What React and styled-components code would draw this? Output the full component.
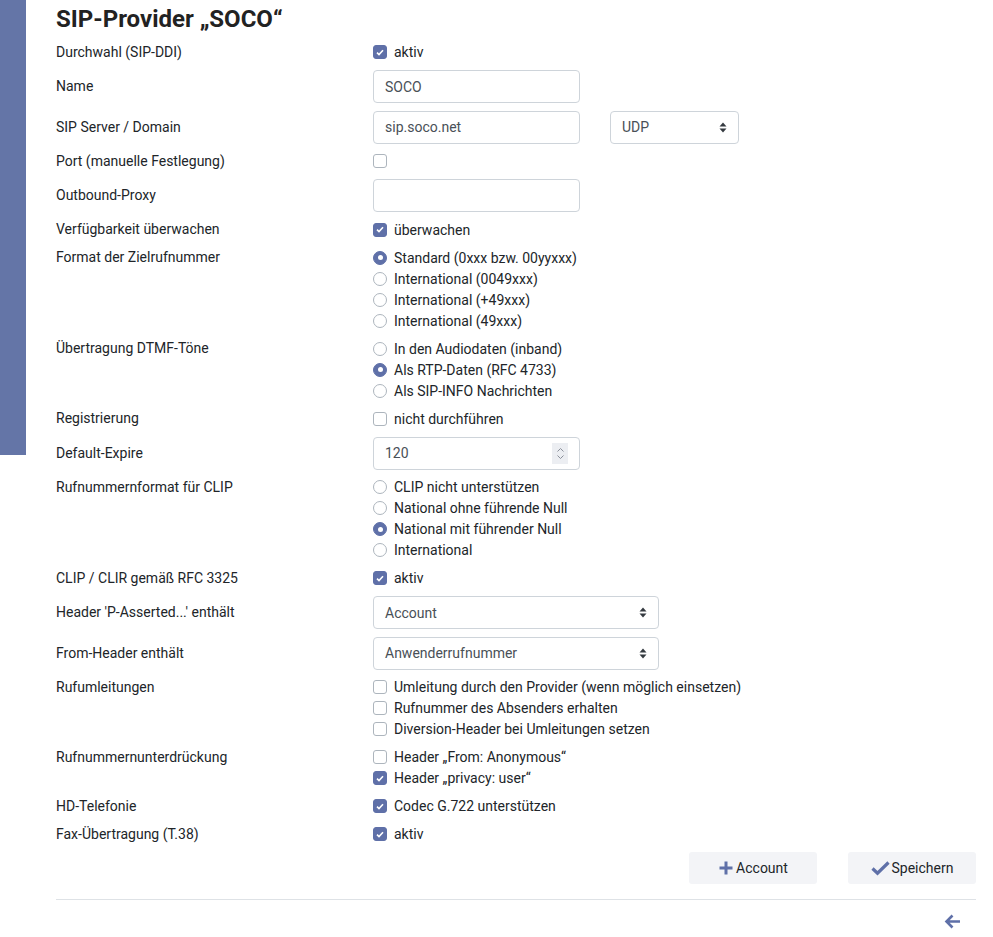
import React from 'react';
import styled, { createGlobalStyle } from 'styled-components';

const GlobalStyle = createGlobalStyle`
  body {
    margin: 0;
    background: #fff;
    font-family: Roboto, "Liberation Sans", Arial, sans-serif;
    color: #212529;
  }
`;

const ACCENT = '#5f70a8';

const Page = styled.div`
  display: flex;
  align-items: flex-start;
`;

const Sidebar = styled.div`
  width: 26px;
  height: 455px;
  flex: none;
  background: #6475a7;
`;

const Main = styled.div`
  width: 920px;
  margin-left: 30px;
`;

const Title = styled.h1`
  margin: 5px 0 7.5px;
  font-size: 24px;
  line-height: 29px;
  font-weight: 700;
  color: #222;
`;

const Row = styled.div`
  display: grid;
  grid-template-columns: 317px 1fr;
  margin-bottom: 7px;
`;

const Label = styled.div`
  font-size: 14px;
  line-height: 21px;
  padding-top: ${p => (p.$field ? '6.5px' : '0')};
`;

const Control = styled.div`
  display: flex;
  flex-direction: column;
  padding-top: ${p => (p.$field ? '0.5px' : '0')};
`;

const Inline = styled.div`
  display: flex;
  gap: 30px;
`;

const TextInput = styled.div`
  box-sizing: border-box;
  width: ${p => p.$w || 207}px;
  height: 33px;
  border: 1px solid #ced4da;
  border-radius: 4px;
  padding: 0 11px;
  display: flex;
  align-items: center;
  justify-content: space-between;
  font-size: 14px;
  color: #495057;
`;

const Spinner = styled.span`
  width: 16px;
  height: 21px;
  background: #eceef2;
  display: flex;
  align-items: center;
  justify-content: center;
  margin-right: 0;
`;

const Option = styled.label`
  display: flex;
  align-items: center;
  gap: 7px;
  height: 21px;
  font-size: 14px;
`;

const Box = styled.span`
  box-sizing: border-box;
  width: 14px;
  height: 14px;
  border-radius: 3px;
  flex: none;
  display: flex;
  align-items: center;
  justify-content: center;
  border: 1px solid ${p => (p.$on ? ACCENT : '#adb5bd')};
  background: ${p => (p.$on ? ACCENT : '#fff')};
`;

const Dot = styled.span`
  box-sizing: border-box;
  width: 14px;
  height: 14px;
  border-radius: 50%;
  flex: none;
  display: flex;
  align-items: center;
  justify-content: center;
  border: 1px solid ${p => (p.$on ? ACCENT : '#adb5bd')};
  background: ${p => (p.$on ? ACCENT : '#fff')};
  &::after {
    content: '';
    width: 5px;
    height: 5px;
    border-radius: 50%;
    background: ${p => (p.$on ? '#fff' : 'transparent')};
  }
`;

const Actions = styled.div`
  display: flex;
  justify-content: flex-end;
  gap: 31px;
  margin-top: 0.5px;
  margin-bottom: 15px;
`;

const Button = styled.button`
  box-sizing: border-box;
  width: 128px;
  height: 32px;
  border: none;
  border-radius: 3px;
  background: #f3f4f7;
  font-family: inherit;
  font-size: 14px;
  color: #212529;
  display: flex;
  align-items: center;
  justify-content: center;
  gap: 2px;
  padding: 0;
`;

const Rule = styled.hr`
  margin: 0;
  border: 0;
  border-top: 1px solid #dee2e6;
`;

const Footer = styled.div`
  display: flex;
  justify-content: flex-end;
  padding: 14px 15px 0 0;
`;

const Check = ({ on, children }) => (
  <Option>
    <Box $on={on}>
      {on && (
        <svg width="8" height="7" viewBox="0 0 8 7">
          <path d="M1 3.6 3 5.5 7 1.2" fill="none" stroke="#fff" strokeWidth="1.6" />
        </svg>
      )}
    </Box>
    {children}
  </Option>
);

const Radio = ({ on, children }) => (
  <Option>
    <Dot $on={on} />
    {children}
  </Option>
);

const SortIcon = () => (
  <svg width="8" height="11" viewBox="0 0 8 11">
    <path d="M4 0.5 7.5 4.5H0.5Z M4 10.5 7.5 6.5H0.5Z" fill="#343a40" />
  </svg>
);

const Select = ({ w, children }) => (
  <TextInput $w={w}>
    <span>{children}</span>
    <SortIcon />
  </TextInput>
);

const Field = ({ label, field, children }) => (
  <Row>
    <Label $field={field}>{label}</Label>
    <Control $field={field}>{children}</Control>
  </Row>
);

export default function App() {
  return (
    <Page>
      <GlobalStyle />
      <Sidebar />
      <Main>
        <Title>SIP-Provider „SOCO“</Title>

        <Field label="Durchwahl (SIP-DDI)"><Check on>aktiv</Check></Field>
        <Field label="Name" field><TextInput>SOCO</TextInput></Field>
        <Field label="SIP Server / Domain" field>
          <Inline>
            <TextInput>sip.soco.net</TextInput>
            <Select w={129}>UDP</Select>
          </Inline>
        </Field>
        <Field label="Port (manuelle Festlegung)"><Check /></Field>
        <Field label="Outbound-Proxy" field><TextInput /></Field>
        <Field label="Verfügbarkeit überwachen"><Check on>überwachen</Check></Field>
        <Field label="Format der Zielrufnummer">
          <Radio on>Standard (0xxx bzw. 00yyxxx)</Radio>
          <Radio>International (0049xxx)</Radio>
          <Radio>International (+49xxx)</Radio>
          <Radio>International (49xxx)</Radio>
        </Field>
        <Field label="Übertragung DTMF-Töne">
          <Radio>In den Audiodaten (inband)</Radio>
          <Radio on>Als RTP-Daten (RFC 4733)</Radio>
          <Radio>Als SIP-INFO Nachrichten</Radio>
        </Field>
        <Field label="Registrierung"><Check>nicht durchführen</Check></Field>
        <Field label="Default-Expire" field>
          <TextInput>
            <span>120</span>
            <Spinner>
              <svg width="9" height="13" viewBox="0 0 9 13">
                <path d="M1.5 4.5 4.5 1.5 7.5 4.5 M1.5 8.5 4.5 11.5 7.5 8.5" fill="none" stroke="#8a8f99" strokeWidth="1" />
              </svg>
            </Spinner>
          </TextInput>
        </Field>
        <Field label="Rufnummernformat für CLIP">
          <Radio>CLIP nicht unterstützen</Radio>
          <Radio>National ohne führende Null</Radio>
          <Radio on>National mit führender Null</Radio>
          <Radio>International</Radio>
        </Field>
        <Field label="CLIP / CLIR gemäß RFC 3325"><Check on>aktiv</Check></Field>
        <Field label="Header 'P-Asserted...' enthält" field><Select w={286}>Account</Select></Field>
        <Field label="From-Header enthält" field><Select w={286}>Anwenderrufnummer</Select></Field>
        <Field label="Rufumleitungen">
          <Check>Umleitung durch den Provider (wenn möglich einsetzen)</Check>
          <Check>Rufnummer des Absenders erhalten</Check>
          <Check>Diversion-Header bei Umleitungen setzen</Check>
        </Field>
        <Field label="Rufnummernunterdrückung">
          <Check>Header „From: Anonymous“</Check>
          <Check on>Header „privacy: user“</Check>
        </Field>
        <Field label="HD-Telefonie"><Check on>Codec G.722 unterstützen</Check></Field>
        <Field label="Fax-Übertragung (T.38)"><Check on>aktiv</Check></Field>

        <Actions>
          <Button>
            <svg width="16" height="16" viewBox="0 0 16 16">
              <path d="M8 1.5V14.5M1.5 8H14.5" stroke={ACCENT} strokeWidth="3" />
            </svg>
            Account
          </Button>
          <Button>
            <svg width="19" height="16" viewBox="0 0 19 16">
              <path d="M1.5 8.5 6.5 13.2 17.5 2.5" fill="none" stroke={ACCENT} strokeWidth="3.2" />
            </svg>
            Speichern
          </Button>
        </Actions>
        <Rule />
        <Footer>
          <svg width="17" height="15" viewBox="0 0 17 15">
            <path d="M16 7.5H2.5M8.5 1.5 2.5 7.5 8.5 13.5" fill="none" stroke={ACCENT} strokeWidth="2.6" />
          </svg>
        </Footer>
      </Main>
    </Page>
  );
}
